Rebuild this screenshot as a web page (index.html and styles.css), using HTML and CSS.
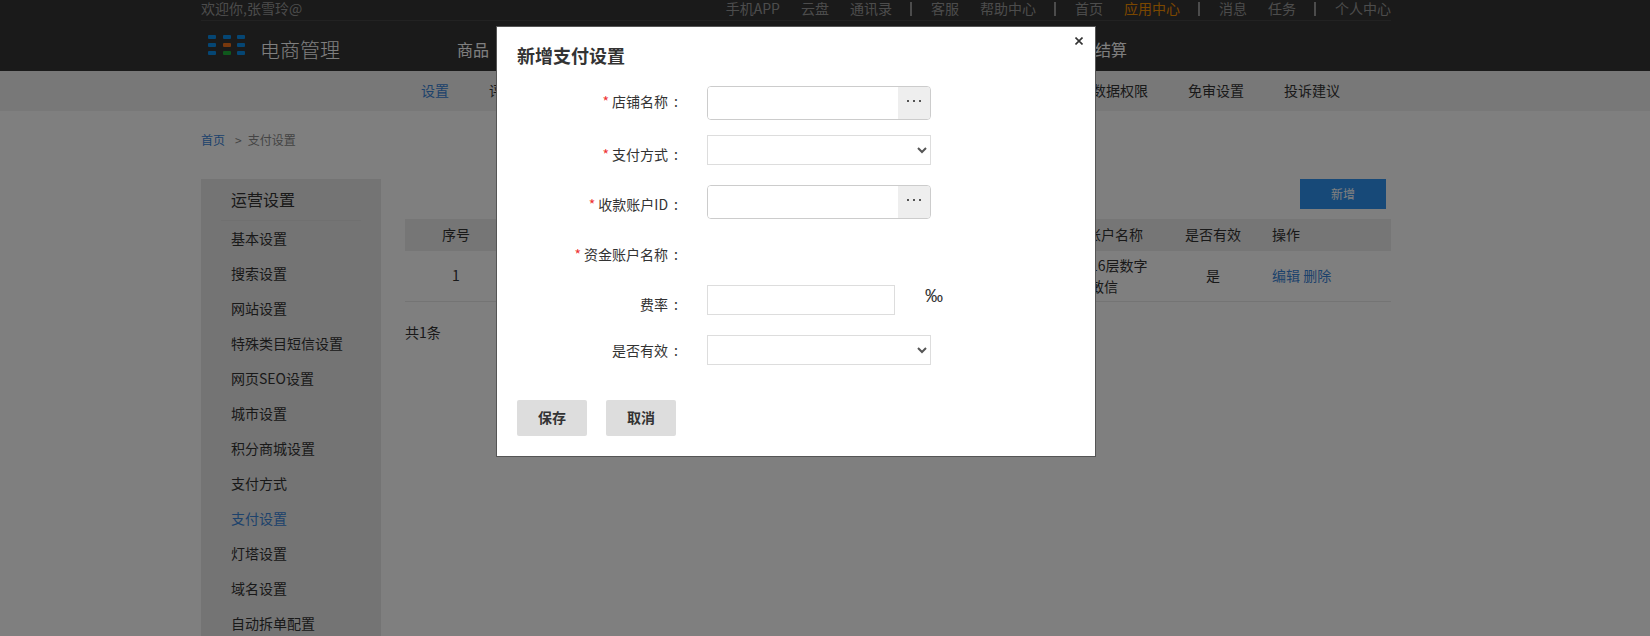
FILE: index.html
```html
<!DOCTYPE html>
<html lang="zh-CN">
<head>
<meta charset="utf-8">
<title>支付设置</title>
<link rel="stylesheet" href="styles.css">
</head>
<body>
<header class="masthead">
  <div class="wrap topbar">
    <span class="welcome">欢迎你,张雪玲@</span>
    <nav class="toplinks">
      <a>手机APP</a><a>云盘</a><a>通讯录</a><i class="sep"></i>
      <a>客服</a><a>帮助中心</a><i class="sep"></i>
      <a>首页</a><a class="hot">应用中心</a><i class="sep"></i>
      <a>消息</a><a>任务</a><i class="sep"></i>
      <a>个人中心</a>
    </nav>
  </div>
  <div class="wrap mainbar">
    <div class="logo">
      <svg class="logo-mark" width="38" height="20" viewBox="0 0 38 20" aria-hidden="true">
        <g fill="#0a8ce8">
          <rect x="0" y="0" width="8" height="4" rx="1"/><rect x="15" y="0" width="8" height="4" rx="1"/><rect x="29" y="0" width="8" height="4" rx="1"/>
          <rect x="0" y="8" width="8" height="4" rx="1"/><rect x="29" y="8" width="8" height="4" rx="1"/>
          <rect x="0" y="16" width="8" height="4" rx="1"/><rect x="29" y="16" width="8" height="4" rx="1"/>
        </g>
        <rect x="15" y="8" width="8" height="4" rx="1" fill="#f0701a"/>
        <rect x="15" y="16" width="8" height="4" rx="1" fill="#1eb038"/>
      </svg>
      <span class="logo-text">电商管理</span>
    </div>
    <nav class="mainnav"><a>商品</a><a>订单</a><a>结算</a></nav>
  </div>
</header>
<nav class="subnav">
  <div class="subnav-in">
    <a class="on">设置</a><a>评价设置</a><a class="push">数据权限</a><a>免审设置</a><a>投诉建议</a>
  </div>
</nav>
<div class="wrap crumbs"><a class="blue">首页</a><span class="gt">&gt;</span><span>支付设置</span></div>
<main class="wrap content">
  <aside class="side">
    <h3>运营设置</h3>
    <ul>
      <li>基本设置</li><li>搜索设置</li><li>网站设置</li><li>特殊类目短信设置</li>
      <li>网页SEO设置</li><li>城市设置</li><li>积分商城设置</li><li>支付方式</li>
      <li class="blue">支付设置</li><li>灯塔设置</li><li>域名设置</li><li>自动拆单配置</li>
    </ul>
  </aside>
  <section class="list">
    <div class="tools"><button class="add" type="button">新增</button></div>
    <table>
      <colgroup><col class="c1"><col><col class="c3"><col class="c4"><col class="c5"></colgroup>
      <thead><tr><th>序号</th><th>店铺名称</th><th>账户名称</th><th>是否有效</th><th class="left">操作</th></tr></thead>
      <tbody><tr><td>1</td><td></td><td class="wrapcell">16层数字<br>敏信</td><td>是</td><td class="left"><a class="blue">编辑</a> <a class="blue">删除</a></td></tr></tbody>
    </table>
    <p class="count">共1条</p>
  </section>
</main>

<div class="mask"></div>
<div class="modal" role="dialog">
  <svg class="close" width="8" height="8" viewBox="0 0 8 8" aria-hidden="true"><path d="M.5.5l7 7M7.5.5l-7 7" stroke="#333" stroke-width="1.6" fill="none"/></svg>
  <h2>新增支付设置</h2>
  <form class="form">
    <label class="lab p5"><em>*</em>店铺名称<span class="colon">:</span></label>
    <div class="picker"><input type="text"><span class="more"><svg width="14" height="2" viewBox="0 0 14 2" aria-hidden="true"><path d="M0 0h2v2H0zM6 0h2v2H6zM12 0h2v2h-2z" fill="#555"/></svg></span></div>

    <label class="lab"><em>*</em>支付方式<span class="colon">:</span></label>
    <div><select class="sel"><option></option></select></div>

    <label class="lab"><em>*</em>收款账户ID<span class="colon">:</span></label>
    <div class="picker"><input type="text"><span class="more"><svg width="14" height="2" viewBox="0 0 14 2" aria-hidden="true"><path d="M0 0h2v2H0zM6 0h2v2H6zM12 0h2v2h-2z" fill="#555"/></svg></span></div>

    <label class="lab"><em>*</em>资金账户名称<span class="colon">:</span></label>
    <div></div>

    <label class="lab">费率<span class="colon">:</span></label>
    <div class="rate"><input class="txt" type="text"><span class="permille">‰</span></div>

    <label class="lab p5">是否有效<span class="colon">:</span></label>
    <div><select class="sel"><option></option></select></div>
  </form>
  <div class="actions"><button type="button">保存</button><button type="button">取消</button></div>
</div>
</body>
</html>
```
FILE: styles.css
```css
* { box-sizing: border-box; }
html, body { margin: 0; height: 636px; overflow: hidden; }
body { background: #fff; color: #333; font: 14px/20px "Noto Sans CJK SC", sans-serif; }
a { color: inherit; text-decoration: none; }
ul { list-style: none; margin: 0; padding: 0; }
.blue { color: #3b85d8; }
.wrap { width: 1190px; margin-left: 201px; }

.masthead { background: #343434; height: 71px; }
.topbar { height: 21px; border-bottom: 1px solid #444; display: flex; justify-content: space-between; line-height: 17px; color: #999; }
.toplinks { display: flex; align-items: center; gap: 21px; height: 17px; }
.hot { color: #f58f00; }
.sep { width: 2px; height: 14px; background: #999; margin: 0 -2px 0 -3px; }
.mainbar { display: flex; align-items: center; height: 50px; padding-top: 6px; }
.logo { width: 256px; flex: none; display: flex; align-items: center; padding-left: 7px; }
.logo-mark { flex: none; margin-top: -8px; }
.logo-text { margin-left: 14px; font-size: 20px; font-weight: 300; color: #fff; padding-top: 1px; }
.mainnav { width: 670px; display: flex; justify-content: space-between; font-size: 16px; color: #fff; }

.subnav { height: 40px; background: #f0f0f0; }
.subnav-in { margin-left: 421px; width: 919px; height: 38px; display: flex; align-items: center; gap: 40px; }
.subnav .on { color: #3b85d8; }
.push { margin-left: auto; }

.crumbs { height: 68px; padding-top: 19px; font-size: 12px; color: #888; }
.gt { margin: 0 6px 0 10px; }
.content { display: flex; align-items: flex-start; gap: 24px; }
.side { width: 180px; flex: none; background: #e8e8e8; padding-bottom: 20px; }
.side h3 { margin: 0 20px; padding-left: 10px; height: 42px; line-height: 40px; font-size: 16px; font-weight: 400; border-bottom: 1px solid #e0e0e0; }
.side ul { padding: 0 0 0 30px; }
.side li { height: 35px; line-height: 35px; }

.list { flex: 1; min-width: 0; }
.tools { display: flex; justify-content: flex-end; padding-right: 5px; height: 40px; }
.add { width: 86px; height: 30px; border: 0; background: #2f93f0; color: #fff; font: inherit; font-size: 12px; }
table { width: 100%; border-collapse: collapse; table-layout: fixed; }
.c1 { width: 102px; }
.c3 { width: 80px; }
.c4 { width: 116px; }
.c5 { width: 120px; }
th { height: 32px; background: #ececec; font-weight: 400; padding: 0 0 2px; }
td { height: 50px; padding: 0; text-align: center; border-bottom: 1px solid #e8e8e8; line-height: 21px; }
th.left, td.left { text-align: left; padding-left: 1px; }
td.wrapcell { text-align: left; padding-left: 15px; white-space: nowrap; }
.count { margin: 20px 0 0; }

.mask { position: fixed; inset: 0; background: rgba(0, 0, 0, .5); }
.modal { position: fixed; left: 496px; top: 26px; width: 600px; height: 431px; background: #fff; border: 1px solid #555; padding: 0 20px; }
.close { position: absolute; left: 578px; top: 10px; }
.modal h2 { margin: 0; height: 59px; padding-top: 16px; font-size: 18px; line-height: 24px; font-weight: 700; }
.form { display: grid; grid-template-columns: 190px 1fr; grid-template-rows: 49px 50px 50px 50px 50px 50px; }
.lab { text-align: right; padding: 9px 29px 0 0; color: #333; }
.lab.p5 { padding-top: 5px; }
.lab em { color: #e33; font-style: normal; margin-right: 3px; font-size: 14px; }
.colon { margin-left: 6px; }
.picker { width: 224px; height: 34px; display: flex; border: 1px solid #ccc; border-radius: 4px; overflow: hidden; }
.picker input { flex: 1; min-width: 0; border: 0; outline: 0; background: #fff; }
.more { width: 32px; flex: none; background: #eee; display: flex; align-items: flex-start; justify-content: center; padding-top: 13px; }
.more svg { display: block; }
.sel { display: block; width: 224px; height: 30px; border: 1px solid #ddd; background: #fff; color: #555; }
.rate { display: flex; align-items: flex-start; }
.txt { width: 188px; height: 30px; border: 1px solid #ddd; padding: 0; }
.permille { margin: 1px 0 0 30px; font: 18px/20px "Liberation Sans", sans-serif; color: #333; }
.actions { display: flex; gap: 19px; margin-top: 15px; }
.actions button { width: 70px; height: 36px; border: 0; border-radius: 2px; background: #ddd; color: #333; padding: 0 0 2px; font: 700 14px/20px "Noto Sans CJK SC", sans-serif; }
```
